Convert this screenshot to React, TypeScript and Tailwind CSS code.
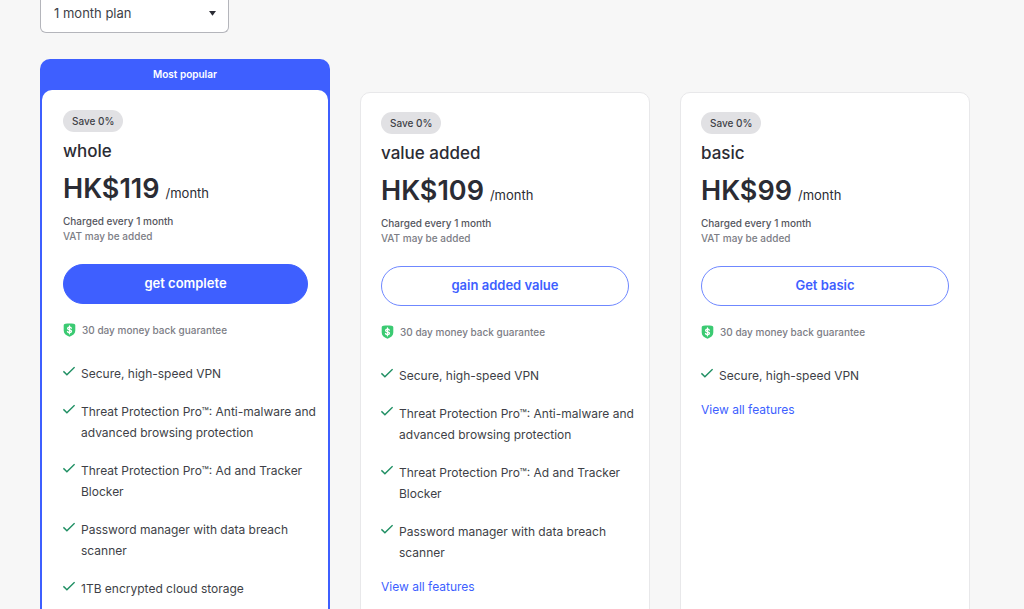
import clsx from 'clsx'

interface Plan {
  name: string
  price: string
  cta: string
  features: string[]
  popular?: boolean
  viewAll?: boolean
}

const VPN = 'Secure, high-speed VPN'
const MALWARE = 'Threat Protection Pro™: Anti-malware and advanced browsing protection'
const ADS = 'Threat Protection Pro™: Ad and Tracker Blocker'
const PASSWORDS = 'Password manager with data breach scanner'

const PLANS: Plan[] = [
  {
    name: 'whole',
    price: 'HK$119',
    cta: 'get complete',
    features: [VPN, MALWARE, ADS, PASSWORDS, '1TB encrypted cloud storage'],
    popular: true,
  },
  {
    name: 'value added',
    price: 'HK$109',
    cta: 'gain added value',
    features: [VPN, MALWARE, ADS, PASSWORDS],
    viewAll: true,
  },
  { name: 'basic', price: 'HK$99', cta: 'Get basic', features: [VPN], viewAll: true },
]

function ShieldIcon() {
  return (
    <svg viewBox="0 0 13 14" className="h-[14px] w-[13px] shrink-0" aria-hidden="true">
      <path d="M.7 2.3C.7 1.2 1.4.8 2.4.7 5 .3 8 .3 10.6.7c1 .1 1.7.5 1.7 1.6v5.2c0 3-2 4.9-5.8 6.2C2.7 12.4.7 10.5.7 7.5z" fill="#3bca72" />
      <path
        d="M8.4 5.2C8.1 4.5 7.4 4.1 6.5 4.1c-1.1 0-1.9.5-1.9 1.3 0 1.9 3.9.9 3.9 2.9 0 .8-.8 1.4-2 1.4-1 0-1.8-.5-2-1.2M6.5 3v7.8"
        fill="none"
        stroke="#fff"
        strokeWidth="1.3"
        strokeLinecap="round"
      />
    </svg>
  )
}

function CheckIcon() {
  return (
    <svg viewBox="0 0 12 10" className="mt-[3px] h-[10px] w-3 shrink-0" aria-hidden="true">
      <path d="M.4 5.4 3.9 8.7 11.6 1.2" fill="none" stroke="#1f8f63" strokeWidth="1.5" />
    </svg>
  )
}

function PlanBody({ plan }: { plan: Plan }) {
  return (
    <>
      <span className="block w-fit rounded-full bg-[#e1e1e4] px-[9px] text-[10px] leading-[22px] font-medium text-[#3e3f47]">
        Save 0%
      </span>
      <h2 className="mt-[5px] text-[17px] leading-7 font-medium text-[#2b2c34]">{plan.name}</h2>
      <p className="mt-[6px] flex items-baseline gap-[6px] leading-9 text-[#2b2c34]">
        <span className="text-[27px] font-semibold">{plan.price}</span>
        <span className="text-[13px]">/month</span>
      </p>
      <div className="mt-[3px] text-[10px] leading-[15px] font-medium">
        <p className="text-[#55565e]">Charged every 1 month</p>
        <p className="text-[#7c7d85]">VAT may be added</p>
      </div>
      <button
        type="button"
        className={clsx(
          'mt-5 h-10 w-full rounded-full border text-[13px] font-semibold',
          plan.popular ? 'border-[#3e5fff] bg-[#3e5fff] text-white' : 'border-[#6f88ff] bg-white text-[#3e5fff]',
        )}
      >
        {plan.cta}
      </button>
      <div className="mt-[18px] flex items-center gap-[6px] text-[10px] leading-4 font-medium text-[#7c7d85]">
        <ShieldIcon />
        30 day money back guarantee
      </div>
      <ul className="mt-[25px] -mr-3 flex flex-col gap-[17px] text-xs leading-[21px] text-[#3e3f47]">
        {plan.features.map(f => (
          <li key={f} className="flex gap-[6px]">
            <CheckIcon />
            <span>{f}</span>
          </li>
        ))}
      </ul>
      {plan.viewAll && (
        <a href="#features" className="mt-[13px] block w-fit text-xs leading-[21px] text-[#3e5fff]">
          View all features
        </a>
      )}
    </>
  )
}

export default function App() {
  return (
    <main className="min-h-screen overflow-hidden bg-[#f7f7f7] pr-[54px] pl-10 font-['Inter',sans-serif]">
      <div className="relative w-[189px]">
        <select
          aria-label="Plan length"
          className="block h-[33px] w-full appearance-none rounded-b-md border border-t-0 border-[#b4b5bb] bg-white pr-8 pb-[5px] pl-[13px] text-[13px] text-[#3e3f47]"
        >
          <option>1 month plan</option>
        </select>
        <svg viewBox="0 0 7 5" className="pointer-events-none absolute top-[11px] right-[13px] h-[5px] w-[7px]" aria-hidden="true">
          <path d="M0 0h7L3.5 4.8z" fill="#2b2c34" />
        </svg>
      </div>

      <div className="mt-[26px] grid grid-cols-3 gap-[30px]">
        {PLANS.map(plan =>
          plan.popular ? (
            <section key={plan.name} className="rounded-[10px] bg-[#3e5fff] px-[2px] pb-[2px]">
              <p className="text-center text-[10px] leading-[31px] font-semibold text-white">Most popular</p>
              <div className="rounded-[10px] bg-white pt-5 pr-5 pb-10 pl-[21px]">
                <PlanBody plan={plan} />
              </div>
            </section>
          ) : (
            <section key={plan.name} className="mt-[33px] rounded-[10px] border border-[#e8e8ea] bg-white px-5 pt-[19px] pb-10">
              <PlanBody plan={plan} />
            </section>
          ),
        )}
      </div>
    </main>
  )
}
